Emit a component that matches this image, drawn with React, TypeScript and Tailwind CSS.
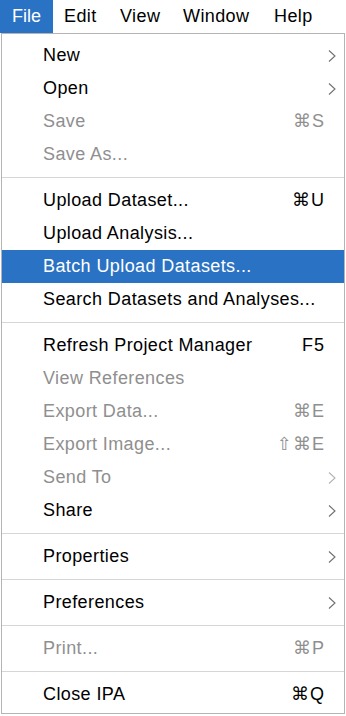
type Item =
  | { kind: 'sep' }
  | { kind: 'item'; label: string; shortcut?: string; submenu?: boolean; disabled?: boolean; active?: boolean }

const items: Item[] = [
  { kind: 'item', label: 'New', submenu: true },
  { kind: 'item', label: 'Open', submenu: true },
  { kind: 'item', label: 'Save', shortcut: '⌘S', disabled: true },
  { kind: 'item', label: 'Save As...', disabled: true },
  { kind: 'sep' },
  { kind: 'item', label: 'Upload Dataset...', shortcut: '⌘U' },
  { kind: 'item', label: 'Upload Analysis...' },
  { kind: 'item', label: 'Batch Upload Datasets...', active: true },
  { kind: 'item', label: 'Search Datasets and Analyses...' },
  { kind: 'sep' },
  { kind: 'item', label: 'Refresh Project Manager', shortcut: 'F5' },
  { kind: 'item', label: 'View References', disabled: true },
  { kind: 'item', label: 'Export Data...', shortcut: '⌘E', disabled: true },
  { kind: 'item', label: 'Export Image...', shortcut: '⇧⌘E', disabled: true },
  { kind: 'item', label: 'Send To', submenu: true, disabled: true },
  { kind: 'item', label: 'Share', submenu: true },
  { kind: 'sep' },
  { kind: 'item', label: 'Properties', submenu: true },
  { kind: 'sep' },
  { kind: 'item', label: 'Preferences', submenu: true },
  { kind: 'sep' },
  { kind: 'item', label: 'Print...', shortcut: '⌘P', disabled: true },
  { kind: 'sep' },
  { kind: 'item', label: 'Close IPA', shortcut: '⌘Q' },
]

function Chevron({ disabled }: { disabled?: boolean }) {
  return (
    <svg width="8" height="12" viewBox="0 0 8 12" className={disabled ? 'text-[#b4b4b4]' : 'text-[#707070]'}>
      <path d="M1 0.5 L7 6 L1 11.5" fill="none" stroke="currentColor" strokeWidth="1.1" />
    </svg>
  )
}

export default function App() {
  return (
    <div className="w-[346px] h-[716px] bg-white text-[18px] tracking-[0.4px] text-black font-['Liberation_Sans','DejaVu_Sans',sans-serif] overflow-hidden">
      {/* Menu bar */}
      <div className="flex h-[33px] items-center whitespace-nowrap">
        <div className="h-full w-[53px] pl-[12px] flex items-center bg-[#2a72c3] text-white tracking-normal">File</div>
        <div className="h-full w-[56px] pl-[11px] flex items-center">Edit</div>
        <div className="h-full w-[63px] pl-[11px] flex items-center">View</div>
        <div className="h-full w-[91px] pl-[11px] flex items-center">Window</div>
        <div className="h-full pl-[11px] flex items-center">Help</div>
      </div>

      {/* Dropdown */}
      <div className="ml-px w-[344px] border border-[#b4b4b4] bg-white pt-[5px] pb-[2px]">
        {items.map((it, i) => {
          if (it.kind === 'sep') {
            return (
              <div key={i} className="h-[13px] flex items-center">
                <div className="w-full h-px bg-[#d6d6d6]" />
              </div>
            )
          }
          const text = it.active ? 'text-white' : it.disabled ? 'text-[#8f8f8f]' : 'text-black'
          return (
            <div
              key={i}
              className={`h-[33px] flex items-center pl-[41px] pr-[8px] ${it.active ? 'bg-[#2a72c3]' : ''} ${text}`}
            >
              <span className="flex-1 whitespace-nowrap">{it.label}</span>
              {it.shortcut && <span className="mr-[11px] whitespace-nowrap tracking-[1px]">{it.shortcut}</span>}
              {it.submenu && <Chevron disabled={it.disabled} />}
            </div>
          )
        })}
      </div>
    </div>
  )
}
